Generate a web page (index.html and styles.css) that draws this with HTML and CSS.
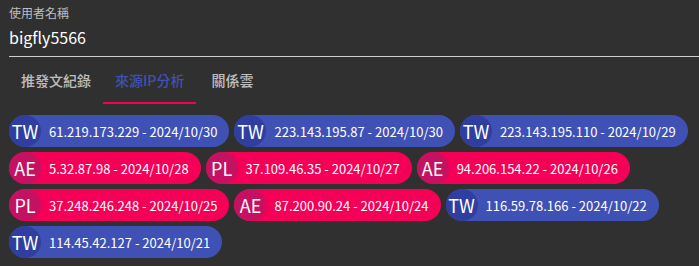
FILE: index.html
```html
<!DOCTYPE html>
<html lang="zh-Hant">
<head>
<meta charset="utf-8">
<link rel="stylesheet" href="styles.css">
</head>
<body>
<div class="page">
  <div class="field">
    <label class="field-label">使用者名稱</label>
    <div class="field-input">bigfly5566</div>
  </div>
  <div class="tabs">
    <div class="tab">推發文紀錄</div>
    <div class="tab active">來源IP分析</div>
    <div class="tab">關係雲</div>
  </div>
  <div class="chips">
    <div class="chip blue"><span class="avatar">TW</span><span class="chip-label">61.219.173.229 - 2024/10/30</span></div>
    <div class="chip blue"><span class="avatar">TW</span><span class="chip-label">223.143.195.87 - 2024/10/30</span></div>
    <div class="chip blue"><span class="avatar">TW</span><span class="chip-label">223.143.195.110 - 2024/10/29</span></div>
    <div class="chip pink"><span class="avatar">AE</span><span class="chip-label">5.32.87.98 - 2024/10/28</span></div>
    <div class="chip pink"><span class="avatar">PL</span><span class="chip-label">37.109.46.35 - 2024/10/27</span></div>
    <div class="chip pink"><span class="avatar">AE</span><span class="chip-label">94.206.154.22 - 2024/10/26</span></div>
    <div class="chip pink"><span class="avatar">PL</span><span class="chip-label">37.248.246.248 - 2024/10/25</span></div>
    <div class="chip pink"><span class="avatar">AE</span><span class="chip-label">87.200.90.24 - 2024/10/24</span></div>
    <div class="chip blue"><span class="avatar">TW</span><span class="chip-label">116.59.78.166 - 2024/10/22</span></div>
    <div class="chip blue"><span class="avatar">TW</span><span class="chip-label">114.45.42.127 - 2024/10/21</span></div>
  </div>
</div>
</body>
</html>
```
FILE: styles.css
```css
html, body {
  margin: 0;
  padding: 0;
  background: #303030;
}
body {
  font-family: "Noto Sans CJK TC", "Noto Sans", sans-serif;
  color: #fff;
}
.page {
  padding-left: 9px;
}
.field {
  display: flex;
  flex-direction: column;
  border-bottom: 1px solid #cfcfcf;
}
.field-label {
  font-size: 12px;
  line-height: 14px;
  margin-top: 6px;
  color: rgba(255,255,255,0.7);
}
.field-input {
  font-size: 16px;
  line-height: 24px;
  margin-top: 5px;
  padding-bottom: 7px;
}
.tabs {
  display: flex;
  height: 47px;
}
.tab {
  min-width: 72px;
  padding: 0 12px;
  box-sizing: border-box;
  display: flex;
  align-items: center;
  justify-content: center;
  font-size: 14px;
  font-weight: 500;
  color: rgba(255,255,255,0.7);
  border-bottom: 2px solid transparent;
}
.tab.active {
  color: #3f51b5;
  border-bottom-color: #f50057;
}
.chips {
  display: flex;
  flex-wrap: wrap;
  gap: 5px;
  padding-top: 11px;
}
.chip {
  height: 32px;
  border-radius: 16px;
  display: flex;
  align-items: center;
}
.chip.blue { background: #3f51b5; }
.chip.pink { background: #f50057; }
.avatar {
  width: 32px;
  height: 32px;
  border-radius: 50%;
  display: flex;
  align-items: center;
  justify-content: center;
  font-size: 18px;
}
.blue .avatar { background: #303f9f; }
.pink .avatar { background: #c51162; }
.chip-label {
  font-size: 13px;
  padding: 0 12px 0 8px;
  white-space: nowrap;
}
```
